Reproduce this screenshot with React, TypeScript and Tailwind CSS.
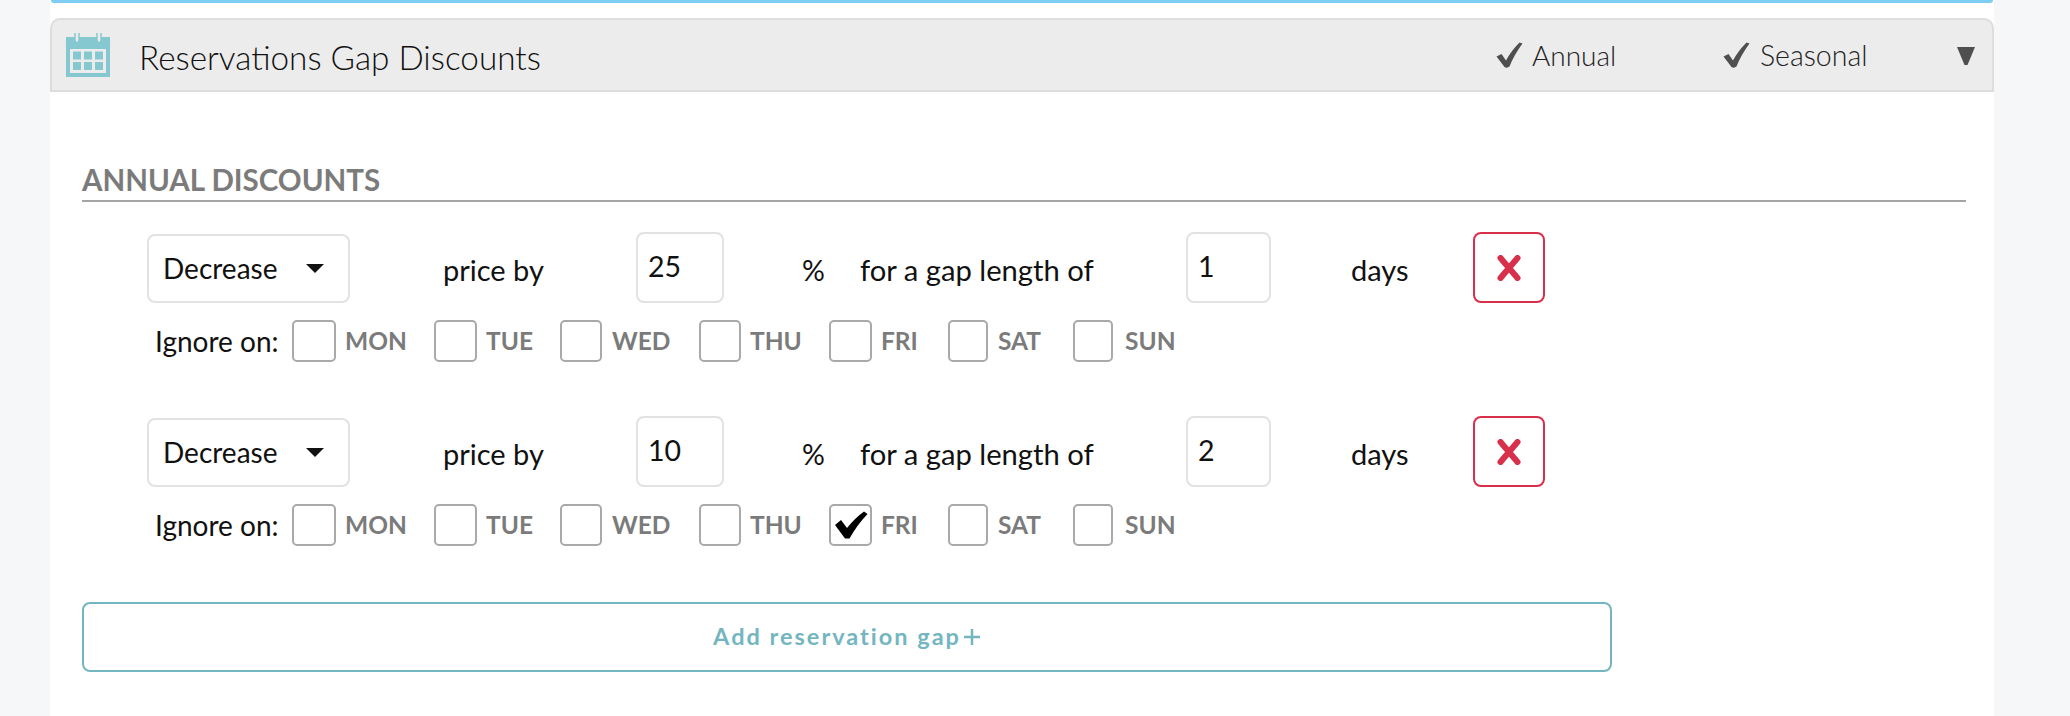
const DAYS = [
  { name: "MON", box: "w-[44px]", label: "w-[59px]", gap: "ml-[9px]" },
  { name: "TUE", box: "w-[43px]", label: "w-[44px]", gap: "ml-[9px]" },
  { name: "WED", box: "w-[42px]", label: "w-[57px]", gap: "ml-[10px]" },
  { name: "THU", box: "w-[42px]", label: "w-[49px]", gap: "ml-[9px]" },
  { name: "FRI", box: "w-[43px]", label: "w-[37px]", gap: "ml-[9px]" },
  { name: "SAT", box: "w-[40px]", label: "w-[45px]", gap: "ml-[10px]" },
  { name: "SUN", box: "w-[40px]", label: "w-[50px]", gap: "ml-[12px]" },
];

function HeaderCheck() {
  return (
    <svg width="27" height="26" viewBox="0 0 27 26" className="shrink-0">
      <path d="M0.500 14.500 L5.500 12 L10 18.500 Q15 9 23.500 0.500 L26.500 1.500 Q18 13 13.500 24.500 Q11 26.500 8.500 25 Z" fill="#4f4f4f" />
    </svg>
  );
}

function CalendarIcon() {
  return (
    <svg width="44" height="44" viewBox="0 0 44 44" className="shrink-0">
      <rect x="0" y="4" width="44" height="40" fill="#86c8d0" />
      <rect x="4" y="16" width="36" height="24" fill="#ececec" />
      <path d="M9 0 V7 Q9 9.500 11 9.500 Q13 9.500 13 7 V0" fill="#ececec" stroke="#86c8d0" strokeWidth="1.500" />
      <path d="M31 0 V7 Q31 9.500 33 9.500 Q35 9.500 35 7 V0" fill="#ececec" stroke="#86c8d0" strokeWidth="1.500" />
      {[7, 18, 29].map((x) =>
        [18.500, 29].map((y) => <rect key={`${x}-${y}`} x={x} y={y} width="8" height="8" fill="#86c8d0" />)
      )}
    </svg>
  );
}

function DayBox({ day, checked }: { day: (typeof DAYS)[number]; checked: boolean }) {
  return (
    <div className="flex items-center">
      <div className={`${day.box} h-[42px] shrink-0 rounded-[5px] border-2 border-[#a9a9a9] flex items-center justify-center bg-white`}>
        {checked && (
          <svg width="34" height="28" viewBox="0 0 34 28">
            <path d="M1 14 L7 9 L13 17 Q21 7 30 0.500 L33.500 3 Q23 14 15.500 27.500 L11 27.500 Z" fill="#000000" />
          </svg>
        )}
      </div>
      <span className={`${day.label} ${day.gap} text-[24.5px] leading-none font-bold text-[#7b7b7b] whitespace-nowrap`}>{day.name}</span>
    </div>
  );
}

function GapRow({ percent, length, checkedDay }: { percent: string; length: string; checkedDay?: string }) {
  return (
    <div className="ml-[65px]">
      <div className="flex items-start h-[71px] text-[28.5px] text-[#111111]">
        <div className="w-[203px] h-[69px] mt-[2px] rounded-[8px] border-2 border-[#e2e2e2] flex items-center pl-[14px] bg-white">
          <span className="leading-none -mt-[2px] text-[28px]">Decrease</span>
          <svg width="20" height="11" viewBox="0 0 20 11" className="ml-[28px]">
            <path d="M1 1 H19 L10 10 Z" fill="#111111" />
          </svg>
        </div>
        <span className="w-[286px] pl-[93px] leading-[76px] whitespace-nowrap text-[29px]">price by</span>
        <div className="w-[88px] h-[71px] rounded-[8px] border-2 border-[#e2e2e2] flex items-center pl-[10px] bg-white">
          <span className="leading-none -mt-[2px]">{percent}</span>
        </div>
        <span className="w-[136px] pl-[78px] leading-[76px]">%</span>
        <span className="w-[326px] leading-[76px] whitespace-nowrap text-[29.2px]">for a gap length of</span>
        <div className="w-[85px] h-[71px] rounded-[8px] border-2 border-[#e2e2e2] flex items-center pl-[10px] bg-white">
          <span className="leading-none -mt-[2px]">{length}</span>
        </div>
        <span className="w-[202px] pl-[80px] leading-[76px] text-[29px]">days</span>
        <div className="w-[72px] h-[71px] rounded-[8px] border-2 border-[#d8304a] flex items-center justify-center bg-white">
          <svg width="24" height="26" viewBox="0 0 24 26">
            <path d="M3.500 3 L20.500 23 M20.500 3 L3.500 23" stroke="#d8304a" strokeWidth="6" strokeLinecap="round" />
          </svg>
        </div>
      </div>
      <div className="flex items-center mt-[17px] ml-[8px] h-[42px]">
        <span className="w-[137px] text-[28px] text-[#111111] leading-none whitespace-nowrap">Ignore on:</span>
        <div className="flex items-center gap-[30px]">
          {DAYS.map((d) => (
            <DayBox key={d.name} day={d} checked={d.name === checkedDay} />
          ))}
        </div>
      </div>
    </div>
  );
}

export default function App() {
  return (
    <div className="h-[716px] overflow-hidden bg-[#f5f7f9] pl-[50px] pr-[76px] font-['Lato',sans-serif]">
      <div className="h-[716px] bg-white">
        <div className="h-[3px] mx-[1px] rounded-b-[5px] border-b-[3px] border-[#7dcdf5]" />
        <div className="mt-[15px] h-[74px] rounded-t-[10px] border-2 border-[#dddddd] bg-[#ececec] flex items-center pl-[14px]">
          <CalendarIcon />
          <span className="ml-[29px] mt-[5px] text-[33.3px] font-light text-[#111111] whitespace-nowrap leading-none">Reservations Gap Discounts</span>
          <div className="ml-auto flex items-center mr-[16px]">
            <div className="flex items-center w-[227px]">
              <HeaderCheck />
              <span className="ml-[9px] text-[28px] font-light text-[#222222] leading-none">Annual</span>
            </div>
            <div className="flex items-center w-[233px]">
              <HeaderCheck />
              <span className="ml-[10px] text-[28.5px] font-light text-[#222222] leading-none">Seasonal</span>
            </div>
            <svg width="20" height="20" viewBox="0 0 20 20" className="mt-[1px]">
              <path d="M1 1 H19 L11.500 19 H8.500 Z" fill="#4f4f4f" />
            </svg>
          </div>
        </div>
        <div className="px-[32px]">
          <div className="mt-[71px] h-[39px] border-b-2 border-[#a5a5a5] text-[29.5px] font-bold text-[#7b7b7b] leading-[33px] w-[1884px]">
            ANNUAL DISCOUNTS
          </div>
          <div className="mt-[30px] flex flex-col gap-[54px]">
            <GapRow percent="25" length="1" />
            <GapRow percent="10" length="2" checkedDay="FRI" />
          </div>
          <div className="mt-[56px] w-[1530px] h-[70px] rounded-[8px] border-2 border-[#74b6bf] flex items-center justify-center text-[23.5px] font-bold tracking-[2px] text-[#74b6bf]">
            Add reservation gap
            <svg width="18" height="18" viewBox="0 0 18 18" className="ml-[2px]">
              <path d="M9 1 V17 M1 9 H17" stroke="#74b6bf" strokeWidth="2.500" />
            </svg>
          </div>
        </div>
      </div>
    </div>
  );
}
